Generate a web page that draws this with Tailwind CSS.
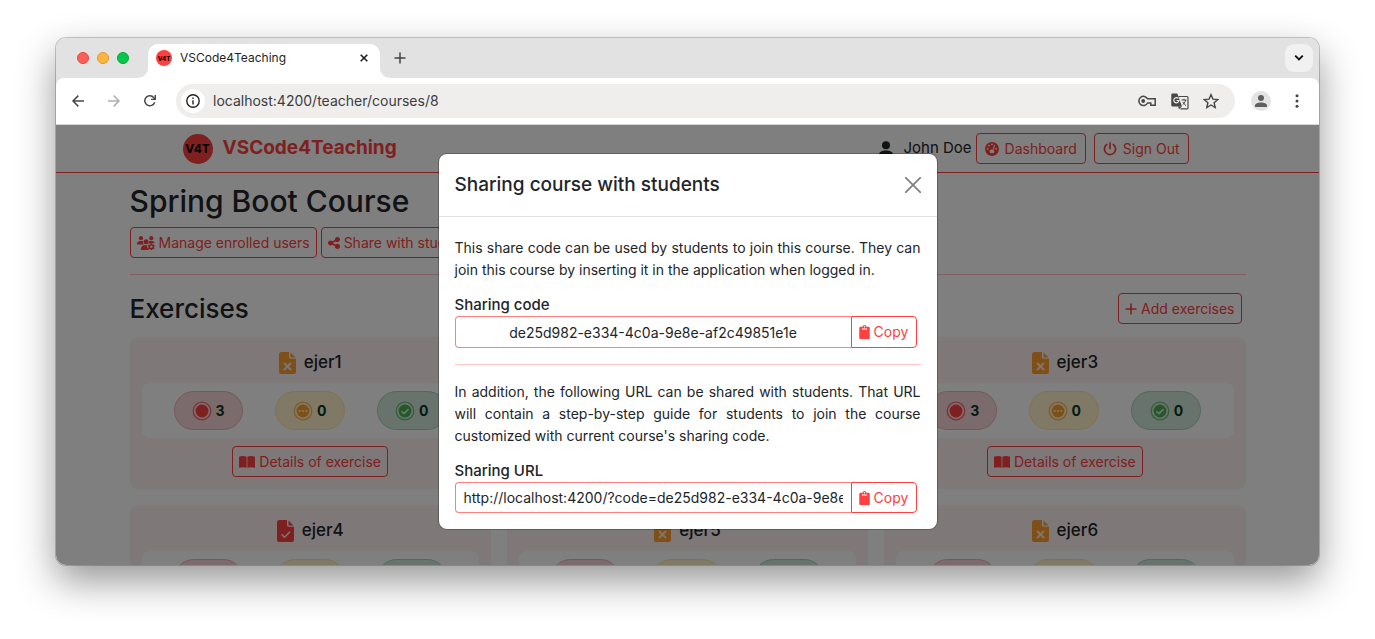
<!DOCTYPE html>
<html lang="en">
<head>
<meta charset="utf-8">
<title>VSCode4Teaching</title>
<script src="https://cdn.jsdelivr.net/npm/@tailwindcss/browser@4"></script>
</head>
<body class="h-screen bg-white font-['Inter',sans-serif] text-[#212529] overflow-hidden">
<svg class="hidden">
  <symbol id="i-clip" viewBox="0 0 384 512"><path fill="currentColor" d="M384 112v352c0 26.500-21.500 48-48 48H48c-26.500 0-48-21.500-48-48V112c0-26.500 21.500-48 48-48h80c0-35.300 28.700-64 64-64s64 28.700 64 64h80c26.500 0 48 21.500 48 48zM192 40c-13.300 0-24 10.700-24 24s10.700 24 24 24 24-10.700 24-24-10.700-24-24-24m96 114v-20a6 6 0 0 0-6-6H102a6 6 0 0 0-6 6v20a6 6 0 0 0 6 6h180a6 6 0 0 0 6-6z"/></symbol>
  <symbol id="i-share" viewBox="0 0 448 512"><path fill="currentColor" d="M352 224c53 0 96-43 96-96s-43-96-96-96s-96 43-96 96c0 4 .2 8 .7 11.900l-94.100 47C145.400 170.200 121.900 160 96 160c-53 0-96 43-96 96s43 96 96 96c25.900 0 49.400-10.200 66.600-26.900l94.100 47c-.5 3.900-.7 7.800-.7 11.900c0 53 43 96 96 96s96-43 96-96s-43-96-96-96c-25.900 0-49.400 10.200-66.600 26.900l-94.100-47c.5-3.900 .7-7.800 .7-11.900s-.2-8-.7-11.900l94.100-47C302.600 213.800 326.100 224 352 224z"/></symbol>
  <symbol id="i-users" viewBox="0 0 18 14"><g fill="currentColor"><circle cx="4" cy="2.200" r="2.100"/><circle cx="14.300" cy="2.200" r="2.100"/><circle cx="9" cy="5.800" r="2.500"/><path d="M0 8.200C0 6.200 1.500 5 3 5h1.800c.4 0 .8.1 1.200.300C5.800 6.700 6.300 7.800 7.100 8.600H.4C.2 8.600 0 8.400 0 8.200zM3.800 13.300c0-2.500 1.700-4.100 3.700-4.100h2.800c-.3 1.700.2 3.300 1.400 4.400.1.100 0 .3-.2.300H4.400c-.3 0-.6-.3-.6-.6zM11.200 7.400c.6-.6.900-1.300.9-2.100.3-.2.700-.3 1.100-.3H15c1.300 0 2.400.8 2.800 2z"/><path fill-rule="evenodd" d="M13.700 7.300h1.300l.3 1 .8.400 1-.2.700 1.100-.7.800v.8l.7.800-.7 1.100-1-.2-.8.400-.3 1h-1.300l-.3-1-.8-.4-1 .2-.7-1.100.7-.8v-.8l-.7-.8.7-1.100 1 .2.800-.4zM14.350 9.600a1.200 1.200 0 1 0 0 2.400 1.200 1.200 0 0 0 0-2.400z"/></g></symbol>
  <symbol id="i-book" viewBox="0 0 16 12"><path fill="currentColor" d="M0 .8C2.600-.2 5.600-.2 7.600.8v11C5.400 10.900 2.600 10.900 0 11.800zM16 .8C13.400-.2 10.400-.2 8.400.8v11c2.200-.9 5-.9 7.600 0z"/></symbol>
  <symbol id="i-gauge" viewBox="0 0 14 14"><path fill="currentColor" fill-rule="evenodd" d="M7 0a7 7 0 1 0 0 14A7 7 0 0 0 7 0zM7 1.500a.9.900 0 1 1 0 1.800.9.900 0 0 1 0-1.800zM4 2.700a.9.900 0 1 1 0 1.800.9.900 0 0 1 0-1.800zM2.700 5.900a.9.900 0 1 1 0 1.800.9.900 0 0 1 0-1.800zM11.300 5.900a.9.900 0 1 1 0 1.800.9.900 0 0 1 0-1.800zM9.400 2.800l.9.500-1.800 4.800a2 2 0 0 1 .3 2.800H5.200A2 2 0 0 1 7.500 7.700z"/></symbol>
  <symbol id="i-power" viewBox="0 0 14 14"><g fill="none" stroke="currentColor" stroke-width="1.700" stroke-linecap="round"><path d="M3.700 2.500a5.600 5.600 0 1 0 6.600 0M7 .9v5.600"/></g></symbol>
  <symbol id="i-user" viewBox="0 0 14 16"><g fill="currentColor"><circle cx="7" cy="4.200" r="4"/><path d="M0 16v-2.500C0 11 3.500 9.600 7 9.600s7 1.400 7 3.900V16z"/></g></symbol>
  <symbol id="i-file-x" viewBox="0 0 17 22"><path fill="currentColor" d="M2.500 0H10v5c0 1 .7 1.700 1.700 1.700H17V20a2 2 0 0 1-2 2H2a2 2 0 0 1-2-2V2.500A2.500 2.500 0 0 1 2.500 0z"/><path fill="currentColor" d="M11.500.500L16.500 5.500H12a.5.500 0 0 1-.5-.5z"/><path d="M5 11l7 7M12 11l-7 7" stroke="#fbecec" stroke-width="1.800"/></symbol>
  <symbol id="i-file-check" viewBox="0 0 17 22"><path fill="currentColor" d="M2.500 0H10v5c0 1 .7 1.700 1.700 1.700H17V20a2 2 0 0 1-2 2H2a2 2 0 0 1-2-2V2.500A2.500 2.500 0 0 1 2.500 0z"/><path fill="currentColor" d="M11.500.500L16.500 5.500H12a.5.500 0 0 1-.5-.5z"/><path d="M4.500 14.300l3 3 5.500-5.500" fill="none" stroke="#fbecec" stroke-width="1.500"/></symbol>
  <symbol id="i-rec" viewBox="0 0 20 20"><circle cx="10" cy="10" r="8.800" fill="none" stroke="currentColor" stroke-width="1.300" stroke-opacity=".75"/><circle cx="10" cy="10" r="6.400" fill="currentColor"/></symbol>
  <symbol id="i-dots" viewBox="0 0 20 20"><circle cx="10" cy="10" r="8.800" fill="none" stroke="currentColor" stroke-width="1.300" stroke-opacity=".75"/><circle cx="10" cy="10" r="6.400" fill="currentColor"/><g fill="#fff3cd"><circle cx="6.700" cy="10" r="1.100"/><circle cx="10" cy="10" r="1.100"/><circle cx="13.300" cy="10" r="1.100"/></g></symbol>
  <symbol id="i-ok" viewBox="0 0 20 20"><circle cx="10" cy="10" r="8.800" fill="none" stroke="currentColor" stroke-width="1.300" stroke-opacity=".75"/><circle cx="10" cy="10" r="6.400" fill="currentColor"/><path d="M6.500 10.300l2.500 2.300 4.500-4.500" fill="none" stroke="#d1e7dd" stroke-width="1.700"/></symbol>
</svg>

<div class="h-full px-14 pt-[38px] pb-[74px]">
<div class="flex h-full flex-col overflow-hidden rounded-[10px] bg-white shadow-[0_0_0_1px_rgba(0,0,0,0.2),0_16px_38px_rgba(0,0,0,0.42)]">

  <div class="flex h-10 shrink-0 bg-[#e2e2e2]">
    <div class="flex w-[92px] items-center gap-2 pl-[21px]">
      <span class="size-3 rounded-full border border-[#e2483f] bg-[#ff5f57]"></span>
      <span class="size-3 rounded-full border border-[#e09a35] bg-[#ffb53d]"></span>
      <span class="size-3 rounded-full border border-[#0fa32c] bg-[#00ca4e]"></span>
    </div>
    <div class="relative mt-1.5 flex h-[34px] w-[232px] items-center rounded-t-[10px] bg-white px-2 pb-1.5">
      <svg class="absolute bottom-0 -left-2.5 size-2.5" viewBox="0 0 10 10"><path d="M10 0v10H0A10 10 0 0 0 10 0z" fill="#fff"/></svg>
      <svg class="absolute -right-2.5 bottom-0 size-2.5" viewBox="0 0 10 10"><path d="M0 0v10h10A10 10 0 0 1 0 0z" fill="#fff"/></svg>
      <span class="flex size-4 items-center justify-center rounded-full bg-[#ff4040] text-[6px] font-extrabold text-black">V4T</span>
      <span class="ml-2 flex-1 text-xs text-[#1f1f1f]">VSCode4Teaching</span>
      <button aria-label="Close tab" class="p-1"><svg class="size-2" viewBox="0 0 8 8"><path d="M.7.700l6.600 6.600M7.300.700L.7 7.300" stroke="#1f1f1f" stroke-width="1.600"/></svg></button>
    </div>
    <button aria-label="New tab" class="ml-3.5 self-center"><svg class="size-3" viewBox="0 0 12 12"><path d="M6 .5v11M.5 6h11" stroke="#444" stroke-width="1.500"/></svg></button>
    <button aria-label="Search tabs" class="mt-1.5 mr-1.5 ml-auto flex size-7 items-center justify-center rounded-[9px] bg-[#f1f1f1]"><svg class="h-2 w-2.5" viewBox="0 0 10 8"><path d="M1.200 1.700L5 5.500l3.800-3.800" fill="none" stroke="#111" stroke-width="1.900"/></svg></button>
  </div>
  <div class="shrink-0 bg-[#e2e2e2]">
  <div class="flex h-[47px] items-center rounded-t-lg border-b border-[#d8d8d8] bg-white text-[#474747]">
    <button aria-label="Back" class="ml-4"><svg class="h-3 w-3" viewBox="0 0 12 12"><path d="M6.300.6L1 6l5.300 5.400M1 6h11" fill="none" stroke="currentColor" stroke-width="1.500"/></svg></button>
    <button aria-label="Forward" class="ml-6 text-[#b0b0b0]"><svg class="h-3 w-3" viewBox="0 0 12 12"><path d="M5.700.6L11 6l-5.300 5.400M11 6H0" fill="none" stroke="currentColor" stroke-width="1.500"/></svg></button>
    <button aria-label="Reload" class="ml-6"><svg class="size-3" viewBox="0 0 12 12"><path d="M10.600 7.200A5 5 0 1 1 9.800 2.800L11 4" fill="none" stroke="currentColor" stroke-width="1.500"/><path d="M12 0v5H7V3.700h3.500V0z" fill="currentColor"/></svg></button>
    <div class="ml-5 flex h-[34px] flex-1 items-center rounded-full bg-[#efeeec] pr-4 pl-[5px]">
      <span class="flex size-6 items-center justify-center rounded-full bg-white"><svg class="size-3.5" viewBox="0 0 14 14"><circle cx="7" cy="7" r="6.200" fill="none" stroke="#222" stroke-width="1.400"/><path d="M7 6.200v4.200M7 3.600v1.500" stroke="#222" stroke-width="1.400"/></svg></span>
      <input aria-label="Address" value="localhost:4200/teacher/courses/8" class="ml-2 min-w-0 flex-1 bg-transparent text-sm text-[#3c3c3c] outline-none">
      <button aria-label="Passwords"><svg class="h-3 w-[19px]" viewBox="0 0 19 12"><path d="M9.500 3.700A4.600 4.600 0 1 0 9.600 8h3.200v2.300h4.400V3.700z" fill="none" stroke="currentColor" stroke-width="1.500"/><circle cx="5.200" cy="6" r="1.900" fill="currentColor"/></svg></button>
      <button aria-label="Translate" class="ml-3.5"><svg class="h-[17px] w-[18px]" viewBox="0 0 18 17"><path d="M7.500 3.500H16a1 1 0 0 1 1 1v10.400a1 1 0 0 1-1 1H9.500" fill="none" stroke="currentColor" stroke-width="1.200"/><path d="M1.300.500h5L11 13.500H1.500a1.200 1.200 0 0 1-1.200-1.200V1.500a1 1 0 0 1 1-1z" fill="currentColor"/><path d="M8 16.200l3-2.700H7z" fill="currentColor"/><path d="M7.300 5.400A2.600 2.600 0 1 0 8 7.500H5.500" fill="none" stroke="#efeeec" stroke-width="1.200"/><path d="M10.500 7h5M13 5.800V7M14.600 7c-.5 2.300-1.700 3.800-3 4.800M11.800 9c.8 1.600 2 2.700 3.200 3.600" fill="none" stroke="currentColor"/></svg></button>
      <button aria-label="Bookmark" class="ml-3.5"><svg class="size-4" viewBox="0 0 16 16"><path d="M8 1.600l1.900 4.500 4.900.4-3.700 3.200 1.100 4.800L8 12l-4.200 2.500 1.100-4.800L1.200 6.500l4.900-.4z" fill="none" stroke="currentColor" stroke-width="1.400"/></svg></button>
    </div>
    <button aria-label="Profile" class="ml-4 flex size-5 items-center justify-center rounded-full bg-[#e3e3e3]"><svg class="size-3 text-[#5f5f5f]" viewBox="0 0 12 12"><circle cx="6" cy="3" r="3" fill="currentColor"/><path d="M0 12v-1.500C0 8.500 3 7.500 6 7.500s6 1 6 3V12z" fill="currentColor"/></svg></button>
    <button aria-label="Menu" class="mr-5 ml-6"><svg class="h-3.5 w-1" viewBox="0 0 4 14"><g fill="currentColor"><circle cx="2" cy="1.800" r="1.500"/><circle cx="2" cy="7" r="1.500"/><circle cx="2" cy="12.200" r="1.500"/></g></svg></button>
  </div>
  </div>

  <div class="relative min-h-0 flex-1 overflow-hidden bg-white">
    <nav class="border-b border-[#ff4040]">
      <div class="mx-auto flex h-[47px] max-w-[1116px] items-center px-[53px]">
        <a href="#" class="flex items-center gap-2.5 text-[19px] font-bold text-[#ff4040]"><span class="flex size-[30px] items-center justify-center rounded-full bg-[#ff4040] text-xs font-bold text-black">V4T</span>VSCode4Teaching</a>
        <svg class="ml-auto h-4 w-3.5"><use href="#i-user"/></svg>
        <span class="ml-2.5 text-[15px]">John Doe</span>
        <a href="#" class="ml-1 flex h-[31px] items-center gap-1.5 rounded border border-[#ff4040] px-2 text-sm text-[#ff4040]"><svg class="size-3.5"><use href="#i-gauge"/></svg>Dashboard</a>
        <button class="mr-1 ml-2 flex h-[31px] items-center gap-1.5 rounded border border-[#ff4040] px-2 text-sm text-[#ff4040]"><svg class="size-3.5"><use href="#i-power"/></svg>Sign Out</button>
      </div>
    </nav>
    <main class="mx-auto max-w-[1116px]">
      <h1 class="mt-2 text-[30px] leading-10 font-medium">Spring Boot Course</h1>
      <div class="mt-1.5 flex gap-1">
        <button class="flex h-[31px] items-center gap-1 rounded border border-[#ff4040] px-1.5 text-sm text-[#ff4040]"><svg class="h-3.5 w-[18px]"><use href="#i-users"/></svg>Manage enrolled users</button>
        <button class="flex h-[31px] items-center gap-1 rounded border border-[#ff4040] px-1.5 text-sm text-[#ff4040]"><svg class="h-3.5 w-3"><use href="#i-share"/></svg>Share with students</button>
      </div>
      <hr class="mt-4 border-[#ffbfbf]">
      <div class="mt-[18px] flex h-[31px] items-center justify-between pr-1">
        <h2 class="text-[26px] font-medium">Exercises</h2>
        <button class="flex h-[31px] items-center gap-1 rounded border border-[#ff4040] px-1.5 text-sm text-[#ff4040]"><svg class="size-3" viewBox="0 0 12 12"><path d="M6 .5v11M.5 6h11" stroke="currentColor" stroke-width="1.600"/></svg>Add exercises</button>
      </div>
      <div id="cards" class="mt-[13px] grid grid-cols-3 gap-4"></div>
    </main>

    <div class="absolute inset-0 bg-black/50">
      <div role="dialog" aria-labelledby="dlg" class="mx-auto mt-[29px] w-[498px] max-w-full rounded-lg bg-white shadow-[0_0_0_1px_rgba(0,0,0,0.25)]">
        <div class="flex h-[63px] items-center justify-between border-b border-[#dee2e6] px-4">
          <h5 id="dlg" class="text-[19px] font-medium">Sharing course with students</h5>
          <button aria-label="Close"><svg class="size-4" viewBox="0 0 16 16"><path d="M.6.600l14.800 14.800M15.400.600L.6 15.400" stroke="#7f7f7f" stroke-width="1.700" stroke-linecap="round"/></svg></button>
        </div>
        <div class="px-4 pt-5 pb-4">
          <p class="text-justify text-sm leading-[22px]">This share code can be used by students to join this course. They can join this course by inserting it in the application when logged in.</p>
          <label for="code" class="mt-3 block text-[15px] leading-[23px] font-medium">Sharing code</label>
          <div class="flex pr-1">
            <input id="code" readonly value="de25d982-e334-4c0a-9e8e-af2c49851e1e" class="h-8 min-w-0 flex-1 rounded-l border border-r-0 border-[#ff7f7f] px-2 text-center text-sm outline-none">
            <button class="flex h-8 w-[66px] items-center justify-center gap-1 rounded-r border border-[#ff4040] text-sm text-[#ff4040]"><svg class="h-3.5 w-[11px]"><use href="#i-clip"/></svg>Copy</button>
          </div>
          <hr class="mt-4 border-[#ffc4c4]">
          <p class="mt-4 text-justify text-sm leading-[22px]">In addition, the following URL can be shared with students. That URL will contain a step-by-step guide for students to join the course customized with current course's sharing code.</p>
          <label for="url" class="mt-3 block text-[15px] leading-[23px] font-medium">Sharing URL</label>
          <div class="flex pr-1">
            <input id="url" readonly value="http://localhost:4200/?code=de25d982-e334-4c0a-9e8e-af2c49851e1e" class="h-[31px] min-w-0 flex-1 rounded-l border border-r-0 border-[#ff7f7f] px-2 text-sm outline-none">
            <button class="flex h-[31px] w-[66px] items-center justify-center gap-1 rounded-r border border-[#ff4040] text-sm text-[#ff4040]"><svg class="h-3.5 w-[11px]"><use href="#i-clip"/></svg>Copy</button>
          </div>
        </div>
      </div>
    </div>
  </div>
</div>
</div>
<script>
  const exercises = [["ejer1", 0], ["ejer2", 0], ["ejer3", 0], ["ejer4", 1], ["ejer5", 0], ["ejer6", 0]];
  document.getElementById("cards").innerHTML = exercises.map(([name, done]) => `
    <article class="rounded-lg bg-[#fff0f0] px-3 pb-3">
      <h3 class="flex h-[46px] items-center justify-center gap-2 pt-1.5 text-[17px] font-medium">
        ${done ? '<svg class="h-[22px] w-[17px] text-[#ff4040]"><use href="#i-file-check"/></svg>' : '<svg class="h-[22px] w-[17px] text-[#ff9f30]"><use href="#i-file-x"/></svg>'}${name}
      </h3>
      <div class="flex h-[55px] items-center justify-evenly rounded-lg bg-white text-sm font-bold text-[#0a3622]">
        <span class="flex h-[39px] w-[69px] items-center justify-center gap-1 rounded-full border border-[#f1aeb5] bg-[#f8d7da]"><svg class="size-5 text-[#ff4040]"><use href="#i-rec"/></svg>3</span>
        <span class="flex h-[39px] w-[70px] items-center justify-center gap-1 rounded-full border border-[#ffe69c] bg-[#fff3cd]"><svg class="size-5 text-[#ff9f30]"><use href="#i-dots"/></svg>0</span>
        <span class="flex h-[39px] w-[70px] items-center justify-center gap-1 rounded-full border border-[#a3cfbb] bg-[#d1e7dd]"><svg class="size-5 text-[#4caf50]"><use href="#i-ok"/></svg>0</span>
      </div>
      <button class="mx-auto mt-2 flex h-[31px] items-center gap-1 rounded border border-[#ff4040] px-1.5 text-sm text-[#ff4040]"><svg class="h-3 w-4"><use href="#i-book"/></svg>Details of exercise</button>
    </article>`).join("");
</script>
</body>
</html>
